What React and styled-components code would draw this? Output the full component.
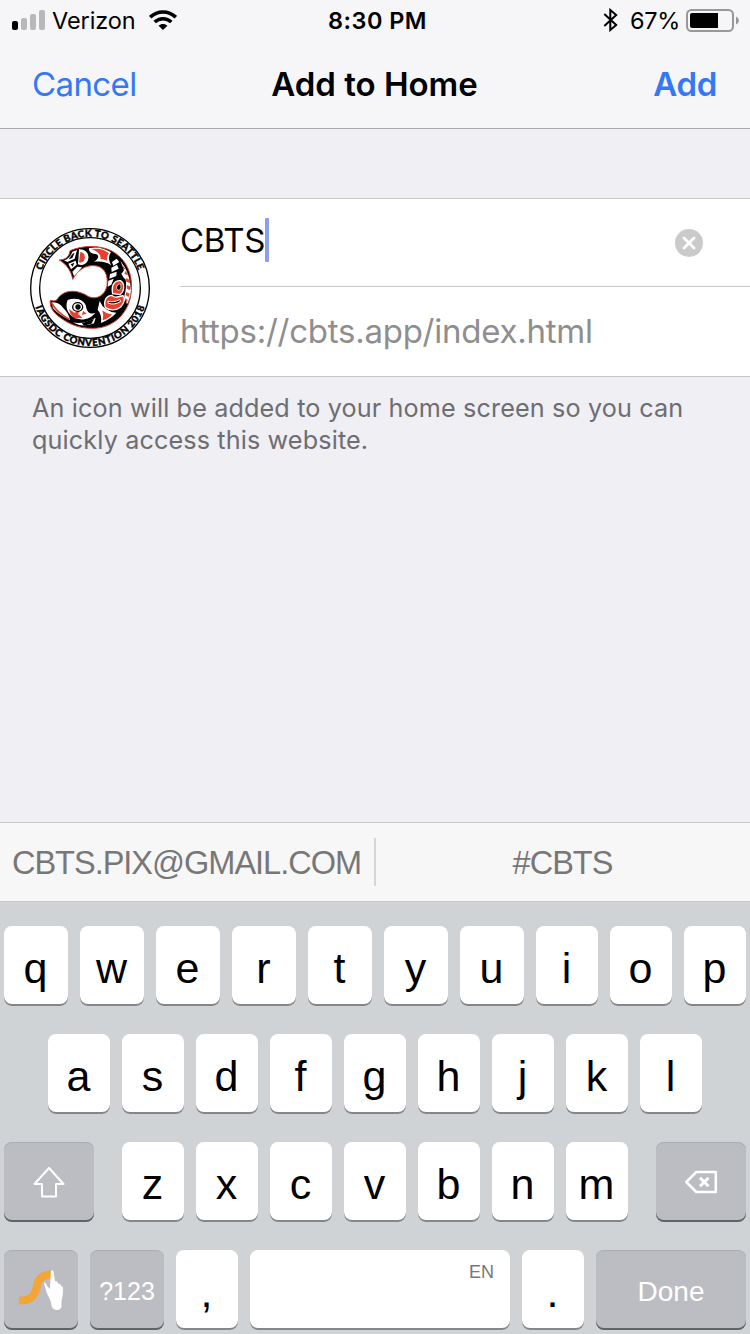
import React from 'react';
import styled, { createGlobalStyle } from 'styled-components';

const Global = createGlobalStyle`
  * { box-sizing: border-box; }
  body { margin: 0; background: #efeff4; }
`;

const sf = `Inter, "Liberation Sans", sans-serif`;
const helvetica = `"Liberation Sans", Arial, sans-serif`;

const Screen = styled.div`
  width: 750px;
  height: 1334px;
  display: flex;
  flex-direction: column;
  background: #efeff4;
  font-family: ${sf};
  overflow: hidden;
`;

const Header = styled.header`
  height: 129px;
  background: #f6f6f8;
  border-bottom: 1px solid #a9a9ac;
`;

const StatusBar = styled.div`
  height: 40px;
  display: grid;
  grid-template-columns: 1fr auto 1fr;
  align-items: center;
  padding: 0 10px 0 12px;
`;

const StatusGroup = styled.div`
  height: 40px;
  display: flex;
  align-items: center;
  justify-content: ${(p) => (p.$end ? 'flex-end' : 'flex-start')};
`;

const StatusText = styled.span`
  height: 40px;
  font-size: 23.5px;
  line-height: 42px;
  font-weight: ${(p) => p.$weight || 400};
  letter-spacing: ${(p) => p.$spacing || 0}px;
  margin: ${(p) => p.$margin || 0};
  white-space: nowrap;
  color: #000;
`;

const NavBar = styled.nav`
  height: 88px;
  display: grid;
  grid-template-columns: 1fr auto 1fr;
  align-items: center;
  padding: 0 33px 0 32px;
`;

const NavItem = styled.span`
  font-size: 33px;
  line-height: 88px;
  font-weight: ${(p) => p.$weight || 400};
  letter-spacing: ${(p) => p.$spacing || 0}px;
  color: ${(p) => p.$color || '#000'};
  text-align: ${(p) => p.$align || 'left'};
  white-space: nowrap;
`;

const Form = styled.section`
  margin-top: 69px;
  height: 179px;
  display: flex;
  background: #fff;
  border-top: 1px solid #c8c7cc;
  border-bottom: 1px solid #c8c7cc;
`;

const IconCell = styled.div`
  width: 180px;
  padding: 29px 0 0 30px;
`;

const Fields = styled.div`
  flex: 1;
`;

const Field = styled.div`
  height: 88px;
  display: flex;
  align-items: center;
  padding-right: 47px;
  font-size: 33px;
  letter-spacing: ${(p) => p.$spacing || 0}px;
  color: ${(p) => p.$color || '#000'};
  border-bottom: ${(p) => (p.$divider ? '1px solid #c8c7cc' : 'none')};
`;

const FieldText = styled.span`
  height: 84px;
  line-height: ${(p) => p.$line || 78}px;
`;

const Caret = styled.span`
  width: 4px;
  height: 44px;
  margin-right: auto;
  margin-top: -6px;
  border-radius: 1px;
  background: #8b9fee;
`;

const Note = styled.p`
  margin: 15px 32px 0;
  font-size: 25.2px;
  line-height: 32px;
  letter-spacing: 0.13px;
  color: #6d6d72;
`;

const Keyboard = styled.section`
  margin-top: auto;
  height: 512px;
  background: #cfd3d6;
`;

const Suggestions = styled.div`
  height: 80px;
  display: flex;
  align-items: center;
  background: #f7f7f7;
  border-top: 1px solid #c8c8cc;
  border-bottom: 1px solid #c6c8ca;
  font-family: ${helvetica};
`;

const Suggestion = styled.span`
  flex: 1 1 0;
  text-align: center;
  font-size: 32.5px;
  line-height: 76px;
  padding: 2px 1px 0 0;
  letter-spacing: -1px;
  color: #777;
  white-space: nowrap;
`;

const Separator = styled.span`
  width: 2px;
  height: 48px;
  background: #d5d5d7;
`;

const Rows = styled.div`
  display: flex;
  flex-direction: column;
  gap: 28px;
  padding-top: 24px;
`;

const Row = styled.div`
  display: flex;
  gap: 12px;
  padding: 0 4px 0 ${(p) => p.$inset || 4}px;
`;

const Key = styled.div`
  flex: none;
  width: ${(p) => p.$w || 62}px;
  height: 80px;
  margin-left: ${(p) => p.$ml || 0}px;
  display: flex;
  align-items: center;
  justify-content: center;
  padding: 3px 1px 0 0;
  border-radius: 8px;
  background: #fff;
  box-shadow: inset 0 -2px 0 #848688;
  font-family: ${helvetica};
  font-size: 43px;
  line-height: 72px;
  color: #000;
`;

const DarkKey = styled(Key)`
  padding: ${(p) => p.$top || 0}px 0 0;
  background: #bcbdc2;
  box-shadow: inset 0 -2px 0 #626366, inset 0 1px 0 #acadb1;
  font-size: ${(p) => p.$size || 25}px;
  letter-spacing: ${(p) => p.$spacing || 0}px;
  color: #fff;
`;

const SpaceKey = styled(Key)`
  align-items: flex-start;
  justify-content: flex-end;
  padding: 11px 16px 0 0;
  font-size: 18px;
  line-height: 22px;
  color: #777;
`;

const Signal = () => (
  <svg width="34" height="20" viewBox="0 0 34 20">
    <rect x="0" y="11" width="6" height="9" rx="2" fill="#000" />
    <rect x="9" y="8" width="6" height="12" rx="2" fill="#b8b8ba" />
    <rect x="18" y="4" width="6" height="16" rx="2" fill="#b8b8ba" />
    <rect x="27" y="0" width="6" height="20" rx="2" fill="#b8b8ba" />
  </svg>
);

const Wifi = () => (
  <svg width="28" height="20" viewBox="0 0 28 20">
    <g fill="none" stroke="#000" strokeWidth="3.6">
      <path d="M1.2 7.2C8.4 .2 19.6 .2 26.8 7.2" />
      <path d="M5.7 12C10.4 7.6 17.6 7.6 22.3 12" />
    </g>
    <path d="M14 20L9.6 15.7C12.1 13.3 15.9 13.3 18.4 15.7Z" />
  </svg>
);

const Bluetooth = () => (
  <svg width="16" height="24" viewBox="0 0 16 24" fill="none" stroke="#000" strokeWidth="2">
    <path d="M1.3 6L13.2 17L7.3 22V2L13.2 7L1.3 18" />
  </svg>
);

const Battery = () => (
  <svg width="54" height="24" viewBox="0 0 54 24">
    <rect x="1" y="2" width="46" height="21" rx="4.5" fill="none" stroke="#98989b" strokeWidth="2" />
    <path d="M6 5H32V20H6Q4 20 4 18V7Q4 5 6 5Z" />
    <path d="M50 8.500Q53 10 53 12.500T50 16.500Z" fill="#98989b" />
  </svg>
);

const Clear = () => (
  <svg width="28" height="28" viewBox="0 0 28 28">
    <circle cx="14" cy="14" r="14" fill="#cacaca" />
    <path d="M9 9L19 19M19 9L9 19" stroke="#fff" strokeWidth="2.8" strokeLinecap="round" />
  </svg>
);

const Logo = () => (
  <svg width="120" height="120" viewBox="30 29 360 360" style={{ display: 'block' }}>
    <defs>
      <path id="topArc" d="M56 209A154 154 0 0 1 364 209" />
      <path id="lowArc" d="M36 209A174 174 0 0 0 384 209" />
    </defs>
    <circle cx="210" cy="209" r="178" fill="#fff" stroke="#000" strokeWidth="4" />
    <circle cx="210" cy="209" r="151" fill="#fff" stroke="#000" strokeWidth="4" />
    <g fontFamily="Lato, sans-serif" fontWeight="900" fontSize="29" textAnchor="middle" stroke="#000" strokeWidth="1.2">
      <text textLength="376" lengthAdjust="spacing"><textPath href="#topArc" startOffset="50%">CIRCLE BACK TO SEATTLE</textPath></text>
      <text textLength="430" lengthAdjust="spacing"><textPath href="#lowArc" startOffset="50%">IAGSDC CONVENTION 2018</textPath></text>
    </g>
    <path d="M150 97C190 80 240 80 275 98C319 122 338 166 334 216C331 278 285 330 218 330C172 330 144 315 120 297C101 284 88 266 91 246C103 249 109 249 115 238C137 212 174 214 206 235C231 246 256 229 261 202C266 167 250 143 224 142C195 140 173 156 158 183C154 159 141 139 118 125C135 124 148 117 150 97Z" stroke="#d33a29" strokeWidth="3" />
    <path d="M157 100L171 95L164 121L142 131L132 126Q150 121 157 100ZM145 136L167 127L170 139L153 153ZM157 160L172 145L186 147L162 174Z" fill="#fff" />
    <path d="M158 106L164 103L157 119L146 123ZM152 138L163 133L158 145Z" />
    <path d="M177 93C201 92 210 112 203 128C196 140 184 143 174 138Z" fill="#fff" />
    <path d="M181 101C195 102 197 117 192 127Q185 135 177 132Z" fill="#e7402e" />
    <path d="M207 89C233 84 257 91 273 102C265 111 265 127 274 141C260 131 246 128 222 130C237 121 239 110 226 107C214 106 205 100 207 89Z" fill="#fff" />
    <path d="M214 92Q248 87 267 105Q258 116 262 127Q250 122 241 122Q246 105 214 92Z" fill="#e7402e" />
    <path d="M276 131L290 121L298 131L280 142ZM274 148L291 139L296 151L275 161ZM270 167L290 160L289 173L268 181ZM265 187L281 181L274 199L263 205Z" fill="#fff" />
    <path d="M301 127Q331 163 333 216Q330 243 321 258L313 232Q321 205 317 184Q308 176 304 166Q316 157 309 147Z" fill="#fff" />
    <path d="M307 140L317 153L310 151ZM317 158L326 171L313 167ZM317 179L331 185L330 194L319 190ZM320 200L332 205L330 216L321 211ZM319 221L329 226L326 236L317 231ZM316 240L323 244L320 252Z" fill="#e7402e" />
    <path d="M278 226C273 203 282 186 301 187C316 196 313 219 300 229Z" fill="#e7402e" stroke="#fff" strokeWidth="4" />
    <path d="M289 210Q292 195 302 197Q306 210 297 217Z" stroke="#fff" strokeWidth="2" />
    <path d="M256 268C250 246 259 232 276 231C283 239 290 237 309 232C317 238 313 254 302 266C289 277 270 277 256 268Z" fill="#e7402e" stroke="#fff" strokeWidth="4" />
    <path d="M264 248Q278 254 299 244L302 249Q283 262 264 254Z" stroke="#fff" strokeWidth="3" />
    <path d="M239 248Q252 280 289 283Q275 300 243 314Q247 291 233 274Z" fill="#fff" />
    <path d="M247 276Q262 288 276 288Q267 301 248 306Q252 291 247 276Z" fill="#e7402e" />
    <path d="M95 252Q118 252 129 268Q146 284 150 305Q120 293 99 270Z" fill="#fff" />
    <path d="M94 253Q110 282 147 303" fill="none" stroke="#d33a29" strokeWidth="5" />
    <path d="M143 245C169 235 197 246 199 268C202 285 215 288 226 283C214 299 190 309 166 300C145 289 133 268 143 245Z" fill="#fff" />
    <path d="M147 272L163 283L179 277L174 287L188 299L163 300L151 286ZM190 278L200 286L185 290Z" fill="#e7402e" />
    <ellipse cx="173" cy="266" rx="15" ry="13" fill="#fff" stroke="#000" strokeWidth="4" />
    <circle cx="174" cy="266" r="8" />
    <path d="M158 312Q193 319 227 298L222 315Q187 329 158 312Z" fill="#fff" />
    <path d="M186 315L222 302L214 316L192 322Z" />
  </svg>
);

const Shift = () => (
  <svg width="34" height="32" viewBox="0 0 34 32" fill="none" stroke="#fff" strokeWidth="2" strokeLinejoin="round">
    <path d="M17 2L31.500 18H24V30.500H10V18H2.500Z" />
  </svg>
);

const Backspace = () => (
  <svg width="34" height="24" viewBox="0 0 34 24" fill="none" stroke="#fff">
    <path d="M2.3 12L12.3 2H31.8V22H12.3Z" strokeWidth="2.5" strokeLinejoin="round" />
    <path d="M16 7.7L24.5 16.3M24.5 7.7L16 16.3" strokeWidth="3" />
  </svg>
);

const Swipe = () => (
  <svg width="46" height="42" viewBox="0 0 46 42">
    <path d="M1 31.5C11 31.5 16 29 18.500 19C20 9 25 5.500 33 5.500" fill="none" stroke="#f3a536" strokeWidth="8" />
    <path d="M34.200 1.500C35.500 1.500 35.800 3 35.800 4.500L37 12.500C39 11.500 40 13 40 15C42 14 43 15.500 43 17C45 17 45 19 45 21C45 27 44 29 43.500 32V38C42 42 35 42 33.500 37C33.500 31 30 28 28.500 23L26 14.500C26.500 12.500 28 14 29 17L32 20L32.800 4C32.800 2.500 33 1.500 34.200 1.500Z" fill="#fff" />
  </svg>
);

export default function App() {
  return (
    <Screen>
      <Global />
      <Header>
        <StatusBar>
          <StatusGroup>
            <Signal />
            <StatusText $margin="0 13px 0 6px" $spacing={-0.1}>Verizon</StatusText>
            <Wifi />
          </StatusGroup>
          <StatusText $weight={600} $spacing={0.45} $margin="0 0 0 3px">8:30 PM</StatusText>
          <StatusGroup $end>
            <Bluetooth />
            <StatusText $margin="0 6px 0 11px" $spacing={-0.3}>67%</StatusText>
            <Battery />
          </StatusGroup>
        </StatusBar>
        <NavBar>
          <NavItem $color="#3478f6" $spacing={-0.6}>Cancel</NavItem>
          <NavItem $weight={600}>Add to Home</NavItem>
          <NavItem $color="#3478f6" $weight={600} $align="right" $spacing={-0.3}>Add</NavItem>
        </NavBar>
      </Header>
      <Form>
        <IconCell><Logo /></IconCell>
        <Fields>
          <Field $divider $spacing={-0.3}>
            <FieldText>CBTS</FieldText>
            <Caret />
            <Clear />
          </Field>
          <Field $color="#8e8e8e" $spacing={-0.25}>
            <FieldText $line={84}>https://cbts.app/index.html</FieldText>
          </Field>
        </Fields>
      </Form>
      <Note>An icon will be added to your home screen so you can<br />quickly access this website.</Note>
      <Keyboard>
        <Suggestions>
          <Suggestion>CBTS.PIX@GMAIL.COM</Suggestion>
          <Separator />
          <Suggestion>#CBTS</Suggestion>
        </Suggestions>
        <Rows>
          <Row>
            {[...'qwertyuiop'].map((c, i) => <Key key={c} $w={i < 7 ? 64 : 62}>{c}</Key>)}
          </Row>
          <Row $inset={48}>
            {[...'asdfghjkl'].map((c) => <Key key={c}>{c}</Key>)}
          </Row>
          <Row>
            <DarkKey $w={90}><Shift /></DarkKey>
            {[...'zxcvbnm'].map((c, i) => <Key key={c} $ml={i ? 0 : 16}>{c}</Key>)}
            <DarkKey $w={90} $ml={16}><Backspace /></DarkKey>
          </Row>
          <Row>
            <DarkKey $w={74}><Swipe /></DarkKey>
            <DarkKey $w={74} $top={2}>?123</DarkKey>
            <Key>,</Key>
            <SpaceKey $w={260}>EN</SpaceKey>
            <Key>.</Key>
            <DarkKey $w={150} $top={4} $size={28}>Done</DarkKey>
          </Row>
        </Rows>
      </Keyboard>
    </Screen>
  );
}
